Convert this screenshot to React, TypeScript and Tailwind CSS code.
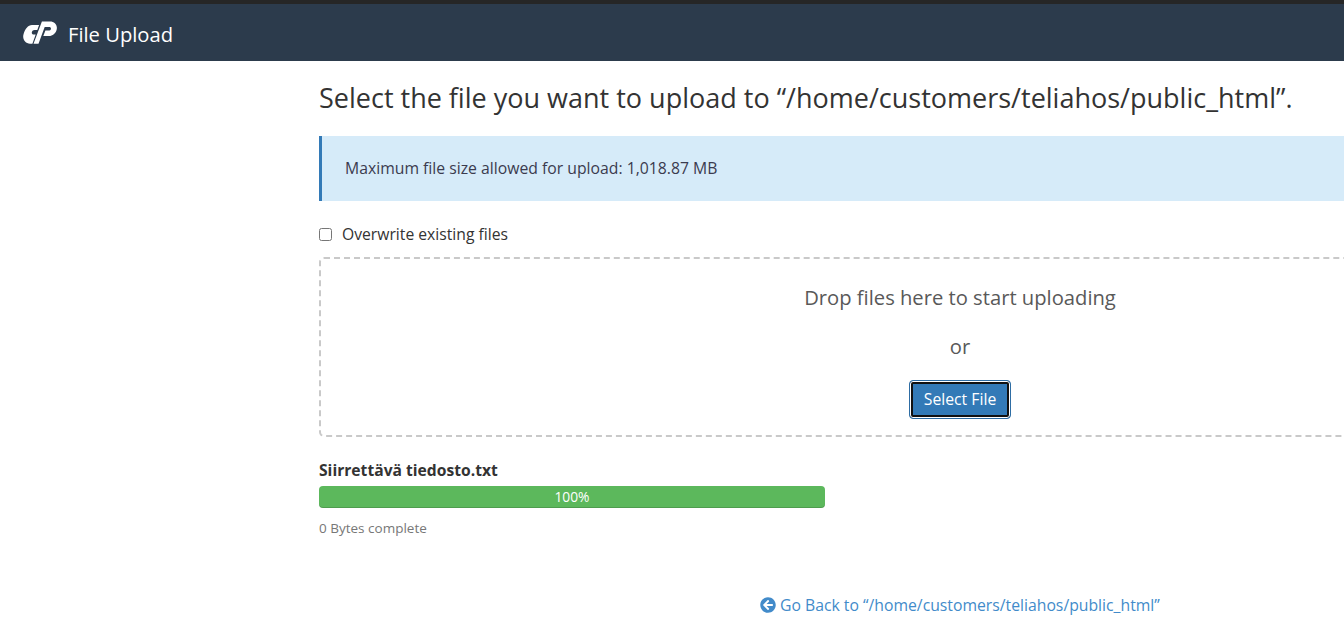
import { FaArrowCircleLeft } from 'react-icons/fa';

function CpanelLogo() {
  return (
    <svg viewBox="0 0 34 24" className="w-[34px] h-[24px] fill-white">
      <path d="M9 4H16.100L14.300 9H11.500C10.200 9 9.200 9.800 8.900 11C8.500 12.400 9.300 13.500 10.700 13.500H12.700L9.400 22.700H7C2.200 22.700-1 18 .6 13C2 8 5 4 9 4Z" />
      <path d="M18.900.5H27C31.500.5 34.700 4 33.700 8.500C32.800 12.500 29.500 15 26 15H20.300L22.400 9.500H25.500C26.800 9.500 27.700 8.900 27.900 7.900C28.100 6.800 27.400 6 26.300 6H21.700L15.500 22.700H10.500Z" />
    </svg>
  );
}

export default function App() {
  return (
    <div className="h-[644px] w-[1344px] overflow-hidden bg-white font-['Open_Sans',sans-serif] text-[#333]">
      <div className="h-[4px] bg-[#262626]" />
      <header className="flex h-[57px] items-center gap-[11px] bg-[#2c3b4c] pl-[23px] text-white">
        <CpanelLogo />
        <span className="mt-[3px] text-[20.2px] leading-none">File Upload</span>
      </header>

      <main className="ml-[319px] w-[1282px]">
        <h1 className="mt-[19px] text-[27px] leading-[36px] font-normal whitespace-nowrap">
          Select the file you want to upload to “/home/customers/teliahos/public_html”.
        </h1>

        <div className="mt-[20px] flex h-[65px] items-center border-l-[3px] border-[#337ab7] bg-[#d6ebf9] pl-[23px] text-[15.75px] text-[#3b3b4f]">
          Maximum file size allowed for upload: 1,018.87 MB
        </div>

        <label className="mt-[22px] flex h-[22px] items-center gap-[10px] pt-[1px] text-[15.7px]">
          <input type="checkbox" className="h-[13px] w-[13px]" />
          Overwrite existing files
        </label>

        <div className="mt-[12px] flex h-[180px] flex-col items-center rounded-[5px] border-2 border-dashed border-[#c9c9c9] pt-[24px] text-[#595959]">
          <p className="text-[20.2px] leading-[28px]">Drop files here to start uploading</p>
          <p className="mt-[21px] text-[20.2px] leading-[28px]">or</p>
          <button className="mt-[20px] h-[39px] w-[102px] rounded-[4px] border border-[#2e6da4] bg-[#337ab7] text-[15.75px] text-white shadow-[inset_0_0_0_1px_#fff,inset_0_0_0_3px_#111]">
            Select File
          </button>
        </div>

        <div className="mt-[22px] text-[15.65px] leading-[22px] font-bold">Siirrettävä tiedosto.txt</div>
        <div className="mt-[5px] flex h-[22px] w-[506px] items-center justify-center rounded-[4px] bg-[#5cb85c] text-[13.8px] text-white shadow-[inset_0_-1px_0_rgba(0,0,0,0.15)]">
          100%
        </div>
        <div className="mt-[10px] text-[13.5px] leading-[20px] text-[#777]">0 Bytes complete</div>

        <a className="mt-[56px] ml-[441px] flex items-center gap-[4px] whitespace-nowrap text-[15.75px] leading-[22px] text-[#428bca]">
          <FaArrowCircleLeft className="h-[16px] w-[16px]" />
          Go Back to “/home/customers/teliahos/public_html”
        </a>
      </main>
    </div>
  );
}
